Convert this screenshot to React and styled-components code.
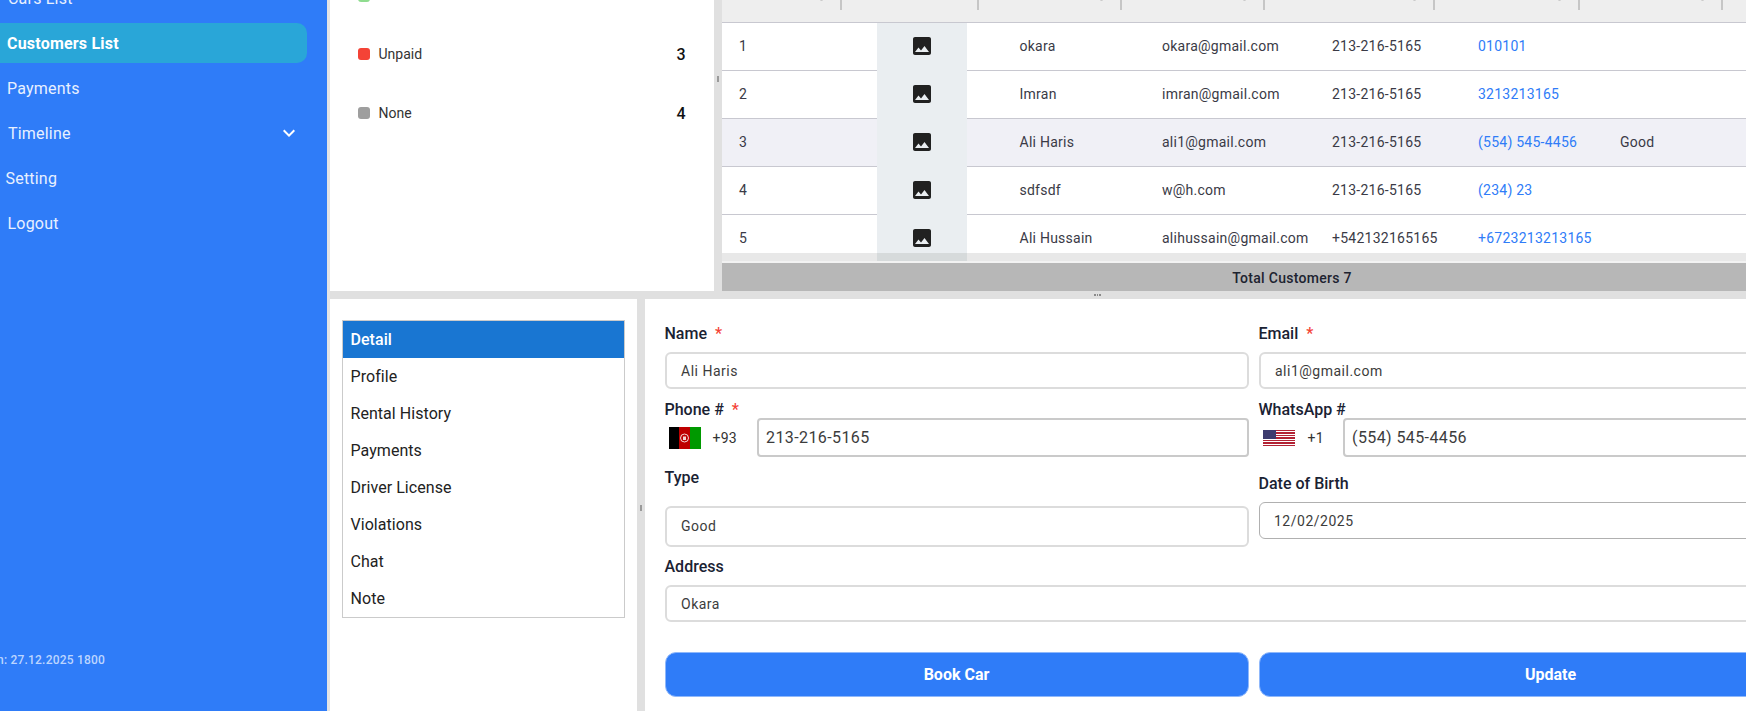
import React from "react";
import styled, { createGlobalStyle } from "styled-components";

const Global = createGlobalStyle`
  html, body { margin: 0; padding: 0; height: 100%; overflow: hidden; background: #fff; }
  body { font-family: Roboto, "Liberation Sans", sans-serif; }
  * { box-sizing: border-box; }
`;

const Page = styled.div`
  display: flex; width: 1746px; height: 711px; overflow: hidden;
`;
const Sidebar = styled.aside`
  flex: 0 0 330px; height: 711px; background: #2f7cf8; border-right: 3px solid #e4e4e4;
  display: flex; flex-direction: column; color: #fff;
`;
const Nav = styled.nav`
  display: flex; flex-direction: column; gap: 5px; margin-top: -22px; padding-right: 20px;
`;
const NavItem = styled.div`
  height: 40px; display: flex; align-items: center; justify-content: space-between;
  padding-left: ${(p) => p.$indent}px; padding-right: 6px;
  font-size: 16px; letter-spacing: 0.2px;
  font-weight: ${(p) => (p.$active ? 700 : 400)};
  color: ${(p) => (p.$active ? "#fff" : "#e8f0ff")};
  background: ${(p) => (p.$active ? "#29a6d8" : "transparent")};
  border-radius: ${(p) => (p.$active ? "0 10px 10px 0" : "0")};
`;
const Version = styled.div`
  margin-top: auto; margin-bottom: 43px; width: 105px; display: flex; justify-content: flex-end;
  white-space: nowrap; font-size: 12px; font-weight: 500; letter-spacing: 0.2px; color: #bcd5ff; line-height: 16px;
`;
const Main = styled.main`
  flex: 1; min-width: 0; display: flex; flex-direction: column; background: #e0e0e0; overflow: hidden;
`;
const TopPane = styled.section`
  height: 291px; display: flex; flex: none;
`;
const BottomPane = styled.section`
  flex: 1; min-height: 0; display: flex;
`;
const VSplit = styled.div`
  flex: 0 0 ${(p) => p.$w}px; display: flex; justify-content: center; align-items: flex-start;
  padding-top: ${(p) => p.$top}px; background: #e0e0e0;
`;
const VGrip = styled.i`
  display: block; width: 1.5px; height: 6px; background: #9a9a9a;
`;
const HSplit = styled.div`
  flex: 0 0 8px; display: flex; align-items: center; justify-content: flex-start;
  padding-left: 764px; gap: 1px; background: #e0e0e0;
`;
const HDot = styled.i`
  display: block; width: 1.5px; height: 1.5px; background: #8a8a8a;
`;
const Legend = styled.div`
  flex: 0 0 383.5px; background: #fff; padding: 0 28px; overflow: hidden;
  display: flex; flex-direction: column; gap: 39px;
`;
const LegendLabel = styled.span`
  flex: 1; font-size: 14px; color: #333;
`;
const LegendCount = styled.span`
  font-size: 16px; font-weight: 500; color: #111;
`;
const LegendRow = styled.div`
  height: 20px; display: flex; align-items: center; gap: 8.5px;
  &:first-child { margin-top: -14px; height: 19px; }
  &:first-child ${LegendLabel} { transform: translateY(-2px); }
  &:first-child ${LegendCount} { transform: translateY(-1px); }
`;
const Dot = styled.span`
  width: 12px; height: 12.5px; border-radius: 3px; background: ${(p) => p.$c};
`;
const TableBox = styled.div`
  flex: 0 0 1140px; display: flex; flex-direction: column; background: #fff; overflow: hidden;
`;
const HeadRow = styled.div`
  flex: none; height: 49px; margin-top: -26px; background: #eee; display: grid;
  grid-template-columns: 120px 137px 143px 143px 170px 145px 143px 1fr;
  border-bottom: 1px solid #c8c8d0;
`;
const HeadCell = styled.div`
  position: relative; font-size: 14px; font-weight: 500; color: #222; line-height: 26px;
  padding-left: ${(p) => p.$pad || 0}px; height: 26px; white-space: nowrap;
  &::after { content: ""; position: absolute; right: 0; top: 0; width: 2px; height: 36px; background: #c6c6c6; }
`;
const SortTail = styled.span`
  position: absolute; right: 19px; top: 22px; width: 3px; height: 5px; background: #c9c9c9; border-radius: 2px;
`;
const Rows = styled.div`
  flex: none; height: 230px; overflow: hidden;
`;
const Row = styled.div`
  height: 48px; display: grid; grid-template-columns: 155px 90px 195px 170px 146px 142px 1fr;
  align-items: stretch; border-bottom: 1px solid #c8c8d0;
  background: ${(p) => (p.$sel ? "#f0f0f6" : "#fff")};
`;
const Cell = styled.div`
  display: flex; align-items: center; padding-left: ${(p) => p.$pad || 0}px; padding-bottom: 1.5px; white-space: nowrap;
  font-size: 14px; letter-spacing: 0.25px; color: ${(p) => (p.$link ? "#2f7cf8" : "#3a3a46")};
`;
const ImgCell = styled.div`
  display: flex; align-items: center; justify-content: center; background: #eaeef1; margin-bottom: -1px; padding-bottom: 2px;
`;
const ScrollBar = styled.div`
  flex: none; height: 10px; display: grid; grid-template-columns: 155px 90px 1fr;
  background: #e8e8e8; border-bottom: 2px solid #f2f2f2;
`;
const ScrollBand = styled.div`
  background: #d6dadb; grid-column: 2;
`;
const TotalBar = styled.div`
  flex: 1; background: #b7b7b7; display: flex; align-items: center; justify-content: center; padding-top: 1.5px;
  font-size: 14px; font-weight: 500; letter-spacing: 0.3px; color: #1d2330;
`;
const TabsPane = styled.div`
  flex: 0 0 307px; background: #fff; padding: 21px 12px 0;
`;
const TabList = styled.div`
  width: 283px; border: 1px solid #cbcbcb; display: flex; flex-direction: column;
`;
const TabItem = styled.div`
  height: 37px; display: flex; align-items: center; padding-left: 7.5px;
  font-size: 16px; letter-spacing: 0.05px;
  font-weight: ${(p) => (p.$active ? 500 : 400)};
  color: ${(p) => (p.$active ? "#fff" : "#222")};
  background: ${(p) => (p.$active ? "#1976d2" : "transparent")};
`;
const FormPane = styled.div`
  flex: none; width: 1200px; background: #fff; padding: 24px 0 0 19.5px;
  display: grid; grid-template-columns: 584px 584px; column-gap: 10px; align-content: start;
`;
const FormCol = styled.div`
  display: flex; flex-direction: column;
`;
const Field = styled.div`
  margin-top: ${(p) => p.$mt || 0}px;
  grid-column: ${(p) => (p.$wide ? "1 / -1" : "auto")};
`;
const Label = styled.div`
  height: ${(p) => p.$h || 20}px; margin-bottom: ${(p) => p.$mb || 0}px;
  line-height: ${(p) => (p.$h || 20) + (p.$down ? 2 : 0)}px;
  font-size: 16px; font-weight: 500; color: #1a2233; white-space: nowrap;
`;
const Star = styled.span`
  color: #f44336; margin-left: 8px;
`;
const Box = styled.div`
  height: ${(p) => p.$h}px; display: flex; align-items: center; padding-left: 14.5px;
  padding-bottom: ${(p) => (p.$lift ? 2 : 0)}px;
  border: ${(p) => p.$border || "2px solid #dcdcdc"}; border-radius: 6px; background: #fff;
  font-size: 14px; letter-spacing: 0.5px; color: #3c3c3c; white-space: nowrap;
`;
const PhoneRow = styled.div`
  display: flex; align-items: center; height: 39px;
`;
const FlagSlot = styled.div`
  flex: 0 0 ${(p) => p.$w}px; display: flex; align-items: center; padding-left: 4px; gap: ${(p) => p.$gap}px;
  font-size: 14px; color: #333; letter-spacing: 0.2px;
`;
const PhoneBox = styled.div`
  flex: 1; height: 39px; display: flex; align-items: center; padding-left: 7.5px;
  border: 2px solid #cacaca; border-radius: 4px; font-size: 16px; letter-spacing: 0.4px; color: #3c3c3c;
`;
const Buttons = styled.div`
  grid-column: 1 / -1; margin-top: 30px; display: grid; grid-template-columns: 584px 584px; column-gap: 10px;
`;
const Btn = styled.button`
  height: 45px; border: 1px solid #8fb8fb; border-radius: 11px; background: #2f7cf8; color: #fff;
  font: 700 16px Roboto, sans-serif; padding: 0 0 1px;
`;

const ImageIcon = () => (
  <svg width="24" height="24" viewBox="0 0 24 24" fill="#212121" aria-hidden="true">
    <path d="M21 19V5c0-1.1-.9-2-2-2H5c-1.1 0-2 .9-2 2v14c0 1.1.9 2 2 2h14c1.1 0 2-.9 2-2zM8.5 13.5l2.5 3.01L14.5 12l4.5 6H5l3.5-4.5z" />
  </svg>
);
const Chevron = () => (
  <svg width="24" height="24" viewBox="0 0 24 24" fill="#fff" aria-hidden="true">
    <path d="M16.59 8.59 12 13.17 7.41 8.59 6 10l6 6 6-6z" />
  </svg>
);
const AfFlag = () => (
  <svg width="32" height="22" viewBox="0 0 32 22" aria-hidden="true">
    <rect width="10" height="22" fill="#000" />
    <rect x="10" width="11" height="22" fill="#be0000" />
    <rect x="21" width="11" height="22" fill="#009900" />
    <circle cx="15.5" cy="11" r="4" fill="none" stroke="#f3d9d9" strokeWidth="1" />
    <rect x="14" y="9.5" width="3" height="3.5" fill="#f3d9d9" />
  </svg>
);
const UsFlag = () => (
  <svg width="32" height="16" viewBox="0 0 32 16" aria-hidden="true" shapeRendering="crispEdges">
    <rect width="32" height="16" fill="#fff" />
    {[0, 2.46, 4.92, 7.38, 9.84, 12.3, 14.76].map((y) => (
      <rect key={y} y={y} width="32" height="1.24" fill="#b22234" />
    ))}
    <rect width="13" height="8.6" fill="#3c3b6e" />
  </svg>
);

const customers = [
  ["1", "okara", "okara@gmail.com", "213-216-5165", "010101", ""],
  ["2", "Imran", "imran@gmail.com", "213-216-5165", "3213213165", ""],
  ["3", "Ali Haris", "ali1@gmail.com", "213-216-5165", "(554) 545-4456", "Good"],
  ["4", "sdfsdf", "w@h.com", "213-216-5165", "(234) 23", ""],
  ["5", "Ali Hussain", "alihussain@gmail.com", "+542132165165", "+6723213213165", ""],
];
const tabs = ["Detail", "Profile", "Rental History", "Payments", "Driver License", "Violations", "Chat", "Note"];

export default function App() {
  return (
    <Page>
      <Global />
      <Sidebar>
        <Nav>
          <NavItem $indent={8}>Cars List</NavItem>
          <NavItem $indent={7} $active>Customers List</NavItem>
          <NavItem $indent={7}>Payments</NavItem>
          <NavItem $indent={8}>Timeline<Chevron /></NavItem>
          <NavItem $indent={5.5}>Setting</NavItem>
          <NavItem $indent={7.5}>Logout</NavItem>
        </Nav>
        <Version>Version: 27.12.2025 1800</Version>
      </Sidebar>
      <Main>
        <TopPane>
          <Legend>
            <LegendRow><Dot $c="#8fdc8f" /><LegendLabel>Paid</LegendLabel><LegendCount>0</LegendCount></LegendRow>
            <LegendRow><Dot $c="#f44336" /><LegendLabel>Unpaid</LegendLabel><LegendCount>3</LegendCount></LegendRow>
            <LegendRow><Dot $c="#9e9e9e" /><LegendLabel>None</LegendLabel><LegendCount>4</LegendCount></LegendRow>
          </Legend>
          <VSplit $w={8.5} $top={76}><VGrip /></VSplit>
          <TableBox>
            <HeadRow>
              <HeadCell><SortTail /></HeadCell>
              <HeadCell />
              <HeadCell><SortTail /></HeadCell>
              <HeadCell><SortTail /></HeadCell>
              <HeadCell><SortTail /></HeadCell>
              <HeadCell $pad={43}>WhatsApp<SortTail /></HeadCell>
              <HeadCell><SortTail /></HeadCell>
            </HeadRow>
            <Rows>
              {customers.map((c) => (
                <Row key={c[0]} $sel={c[0] === "3"}>
                  <Cell $pad={17}>{c[0]}</Cell>
                  <ImgCell><ImageIcon /></ImgCell>
                  <Cell $pad={52.5}>{c[1]}</Cell>
                  <Cell>{c[2]}</Cell>
                  <Cell>{c[3]}</Cell>
                  <Cell $link>{c[4]}</Cell>
                  <Cell>{c[5]}</Cell>
                </Row>
              ))}
            </Rows>
            <ScrollBar><ScrollBand /></ScrollBar>
            <TotalBar>Total Customers 7</TotalBar>
          </TableBox>
        </TopPane>
        <HSplit><HDot /><HDot /><HDot /></HSplit>
        <BottomPane>
          <TabsPane>
            <TabList>
              {tabs.map((t, i) => <TabItem key={t} $active={i === 0}>{t}</TabItem>)}
            </TabList>
          </TabsPane>
          <VSplit $w={8} $top={206}><VGrip /></VSplit>
          <FormPane>
            <FormCol>
              <Field>
                <Label $mb={9} $down>Name<Star>*</Star></Label>
                <Box $h={37}>Ali Haris</Box>
              </Field>
              <Field $mt={11}>
                <Label $h={18} $down>Phone #<Star>*</Star></Label>
                <PhoneRow>
                  <FlagSlot $w={92} $gap={12}><AfFlag />+93</FlagSlot>
                  <PhoneBox>213-216-5165</PhoneBox>
                </PhoneRow>
              </Field>
              <Field $mt={11}>
                <Label $mb={18}>Type</Label>
                <Box $h={41} $lift>Good</Box>
              </Field>
            </FormCol>
            <FormCol>
              <Field>
                <Label $mb={9} $down>Email<Star>*</Star></Label>
                <Box $h={37}>ali1@gmail.com</Box>
              </Field>
              <Field $mt={11}>
                <Label $h={18} $down>WhatsApp #</Label>
                <PhoneRow>
                  <FlagSlot $w={84} $gap={13}><UsFlag />+1</FlagSlot>
                  <PhoneBox>(554) 545-4456</PhoneBox>
                </PhoneRow>
              </Field>
              <Field $mt={17}>
                <Label $mb={8}>Date of Birth</Label>
                <Box $h={37} $border="1.5px solid #b0b0b0">12/02/2025</Box>
              </Field>
            </FormCol>
            <Field $mt={9} $wide>
              <Label $mb={9} $down>Address</Label>
              <Box $h={37}>Okara</Box>
            </Field>
            <Buttons>
              <Btn>Book Car</Btn>
              <Btn>Update</Btn>
            </Buttons>
          </FormPane>
        </BottomPane>
      </Main>
    </Page>
  );
}
